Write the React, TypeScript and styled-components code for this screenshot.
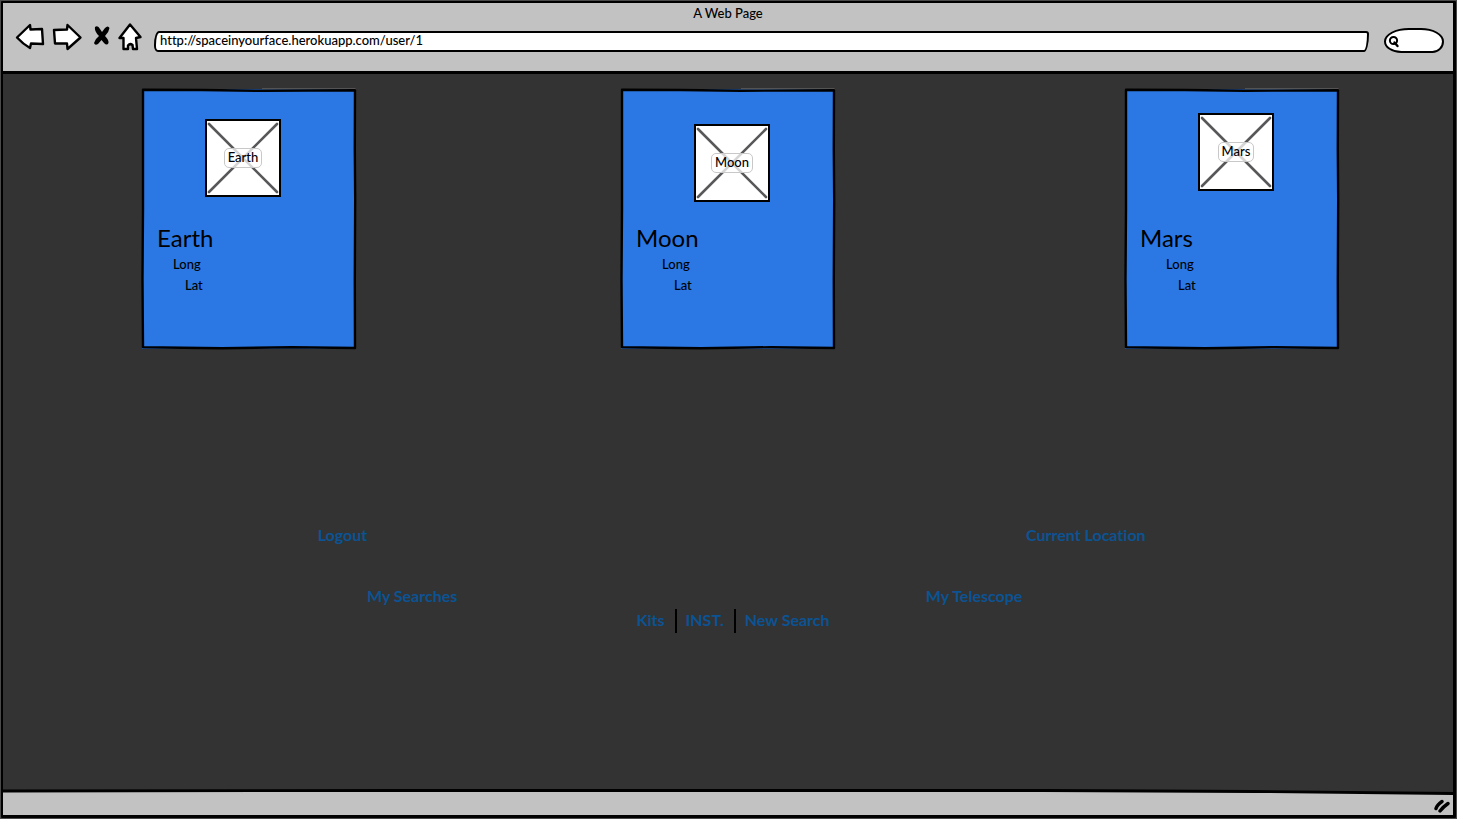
import React from "react";
import styled, { createGlobalStyle } from "styled-components";

const GlobalStyle = createGlobalStyle`
  * { box-sizing: border-box; }
  body {
    margin: 0;
    background: #4a4a4a;
    font-family: Lato, "Open Sans", sans-serif;
    font-variant-ligatures: none;
    color: #000;
  }
`;

const Page = styled.div`
  min-height: 100vh;
  padding: 1px;
  display: flex;
`;

const Frame = styled.div`
  flex: 1;
  min-width: 0;
  display: flex;
  flex-direction: column;
  border: 3px solid #000;
  border-width: 2px 3px 3px 2px;
  border-radius: 1px;
  background: #333;
`;

const BrowserBar = styled.header`
  height: 71px;
  padding-top: 1px;
  background: #c2c2c2;
  border-bottom: 3px solid #000;
`;

const WindowTitle = styled.h1`
  margin: 0;
  font-size: 13px;
  font-weight: 500;
  line-height: 19px;
  text-align: center;
`;

const Toolbar = styled.div`
  display: flex;
  align-items: flex-end;
  gap: 9px;
  padding: 0 9px 0 13px;
`;

const ToolButton = styled.button<{ $width: number }>`
  width: ${(p) => p.$width}px;
  height: 30px;
  padding: 0;
  border: 0;
  background: none;
  svg {
    display: block;
    overflow: visible;
  }
`;

const Address = styled.input`
  flex: 1;
  min-width: 0;
  height: 21px;
  margin: 0 6px 1px 2px;
  padding: 0 4px 3px;
  border: 2px solid #000;
  border-radius: 5px 3px 5px 4px / 14px 3px 18px 6px;
  background: #fff;
  font: 500 13px/14px Lato, sans-serif;
  font-variant-ligatures: none;
  color: #000;
`;

const SearchBox = styled.label`
  display: flex;
  align-items: center;
  width: 60px;
  height: 25px;
  padding-left: 2px;
  border: 2px solid #000;
  border-radius: 26px 24px 12px 18px / 14px 14px 12px 12px;
  background: #fff;
`;

const SearchInput = styled.input`
  width: 32px;
  padding: 0;
  border: 0;
  outline: 0;
  background: none;
  font: 13px Lato, sans-serif;
`;

const Content = styled.main`
  flex: 1;
  padding-top: 15px;
`;

const Cards = styled.section`
  display: grid;
  grid-template-columns: 139fr 214px 265fr 214px 290fr 214px 114fr;
`;

const Card = styled.article<{ $column: number }>`
  grid-column: ${(p) => p.$column};
  position: relative;
  height: 260px;
  background: #2b78e4;
`;

const Outline = styled.svg`
  position: absolute;
  inset: 0;
  width: 100%;
  height: 100%;
  overflow: visible;
  pointer-events: none;
`;

const PictureArea = styled.div<{ $left: number; $top: number }>`
  height: 135px;
  padding: ${(p) => p.$top}px 0 0 ${(p) => p.$left}px;
`;

const Picture = styled.div`
  position: relative;
  display: grid;
  place-items: center;
  width: 76px;
  height: 78px;
  border: 2px solid #000;
  background: #fff;
`;

const PictureLabel = styled.span`
  position: relative;
  height: 20px;
  padding: 0 3px;
  border: 1px solid #c8c8c8;
  border-radius: 5px;
  background: rgba(255, 255, 255, 0.75);
  font-size: 13px;
  font-weight: 500;
  line-height: 16px;
`;

const Name = styled.h2`
  margin: 0;
  padding-left: 15px;
  font-size: 24px;
  font-weight: 400;
  line-height: 28px;
`;

const Coordinates = styled.div<{ $indent: number }>`
  padding: 2px 0 0 ${(p) => p.$indent}px;
  font-size: 13px;
  font-weight: 500;
  line-height: 21px;
`;

const Latitude = styled.div`
  padding-left: 12px;
`;

const Links = styled.nav`
  margin-top: 176px;
`;

const LinkRow = styled.div<{ $start: number; $end: number }>`
  display: flex;
  justify-content: space-between;
  margin-bottom: 41px;
  padding: 0 ${(p) => p.$end}% 0 ${(p) => p.$start}%;
`;

const LinkBar = styled.div`
  display: flex;
  margin-top: -38px;
  padding-left: 43%;
`;

const TextLink = styled.a`
  color: #0b5394;
  font-size: 16px;
  font-weight: 700;
  line-height: 20px;
  text-decoration: none;
  white-space: nowrap;
`;

const BarLink = styled(TextLink)`
  padding: 0 10px 2px;
  line-height: 22px;
  & + & {
    border-left: 2px solid #000;
    padding-left: 9px;
  }
`;

const StatusBar = styled.footer`
  position: relative;
  display: flex;
  justify-content: flex-end;
  height: 23px;
  padding: 6px 3px 0 0;
  background: #c2c2c2;
`;

const StatusEdge = styled.svg`
  position: absolute;
  left: 0;
  top: -3px;
  width: 100%;
  height: 8px;
`;

const Grip = styled.svg`
  position: relative;
`;

type Body = { name: string; column: number; left: number; top: number };

const bodies: Body[] = [
  { name: "Earth", column: 2, left: 63, top: 30 },
  { name: "Moon", column: 4, left: 73, top: 35 },
  { name: "Mars", column: 6, left: 73, top: 24 },
];

const stroke = {
  stroke: "#000",
  strokeWidth: 2.4,
  strokeLinejoin: "round" as const,
  strokeLinecap: "round" as const,
};

function BodyCard({ name, column, left, top }: Body) {
  return (
    <Card $column={column}>
      <Outline viewBox="0 0 214 260" preserveAspectRatio="none" aria-hidden="true">
        <path d="M120 0H213.500V60" fill="none" stroke="#777" strokeWidth="1" />
        <path
          d="M1 .8 L60 1 L120 1.8 L213 1.2 L212.800 60 L213.2 110 L212.8 190 L213 259 L150 258.2 L80 259.2 L1 258.2 L.5 190 L1 120 Z"
          fill="none"
          {...stroke}
        />
      </Outline>
      <PictureArea $left={left} $top={top}>
        <Picture>
          <Outline viewBox="0 0 72 74" aria-hidden="true">
            <path d="M2 3 70 71M70 3 2 71" stroke="#58585a" strokeWidth="2.6" strokeLinecap="round" />
          </Outline>
          <PictureLabel>{name}</PictureLabel>
        </Picture>
      </PictureArea>
      <Name>{name}</Name>
      <Coordinates $indent={left - 32}>
        <div>Long</div>
        <Latitude>Lat</Latitude>
      </Coordinates>
    </Card>
  );
}

export default function App() {
  return (
    <Page>
      <GlobalStyle />
      <Frame>
        <BrowserBar>
          <WindowTitle>A Web Page</WindowTitle>
          <Toolbar>
            <ToolButton $width={28} aria-label="Back">
              <svg width="28" height="30">
                <path d="M1 14.5 14 2 14.500 6.500 26 6 27 21 15 20.500 14 25 Q7 21 1 14.500Z" fill="#fff" {...stroke} />
              </svg>
            </ToolButton>
            <ToolButton $width={30} aria-label="Forward">
              <svg width="30" height="30">
                <path d="M1 7 14 6.500 14.500 2 27.500 14.500 14.500 26 14 20.500 2 20.500Z" fill="#fff" {...stroke} />
              </svg>
            </ToolButton>
            <ToolButton $width={18} aria-label="Stop">
              <svg width="18" height="30">
                <path d="M3 4Q6 2 8 6L10 9 13 5Q16 2 17.500 5Q17 9 13 13Q17 17 16.500 20Q15 23 12 20L9.500 17 6 21Q3 23 2 20Q3 16 7 13Q2 8 3 4Z" />
              </svg>
            </ToolButton>
            <ToolButton $width={24} aria-label="Home">
              <svg width="24" height="30">
                <path d="M11 1.500 21.500 14 17 15 18 26 14 26 13.500 22Q11 20 9 22.500L9 26 4.500 26 4.500 15 .5 15Z" fill="#fff" {...stroke} />
              </svg>
            </ToolButton>
            <Address aria-label="Address" defaultValue="http://spaceinyourface.herokuapp.com/user/1" />
            <SearchBox>
              <svg width="14" height="16" aria-hidden="true">
                <circle cx="5.500" cy="7.500" r="3.600" fill="none" {...stroke} strokeWidth="2" />
                <path d="M6.500 9.500 9.500 13" {...stroke} />
              </svg>
              <SearchInput aria-label="Search" />
            </SearchBox>
          </Toolbar>
        </BrowserBar>
        <Content>
          <Cards>
            {bodies.map((body) => (
              <BodyCard key={body.name} {...body} />
            ))}
          </Cards>
          <Links>
            <LinkRow $start={21.7} $end={21.2}>
              <TextLink href="#logout">Logout</TextLink>
              <TextLink href="#location">Current Location</TextLink>
            </LinkRow>
            <LinkRow $start={25.1} $end={29.7}>
              <TextLink href="#searches">My Searches</TextLink>
              <TextLink href="#telescope">My Telescope</TextLink>
            </LinkRow>
            <LinkBar>
              <BarLink href="#kits">Kits</BarLink>
              <BarLink href="#inst">INST.</BarLink>
              <BarLink href="#new">New Search</BarLink>
            </LinkBar>
          </Links>
        </Content>
        <StatusBar>
          <StatusEdge viewBox="0 0 1449 8" preserveAspectRatio="none" aria-hidden="true">
            <path d="M1040 0H1449V4L1250 2Z" fill="#333" />
            <path d="M0 2 400 1.500 1040 1.500 1250 2.500 1449 4.500" fill="none" stroke="#000" strokeWidth="2.800" />
          </StatusEdge>
          <Grip width="16" height="16" aria-hidden="true">
            <path d="M2 10.500Q3 7 8 3.500M6 13Q9 9 14 5.500" fill="none" {...stroke} strokeWidth="3.400" />
          </Grip>
        </StatusBar>
      </Frame>
    </Page>
  );
}
